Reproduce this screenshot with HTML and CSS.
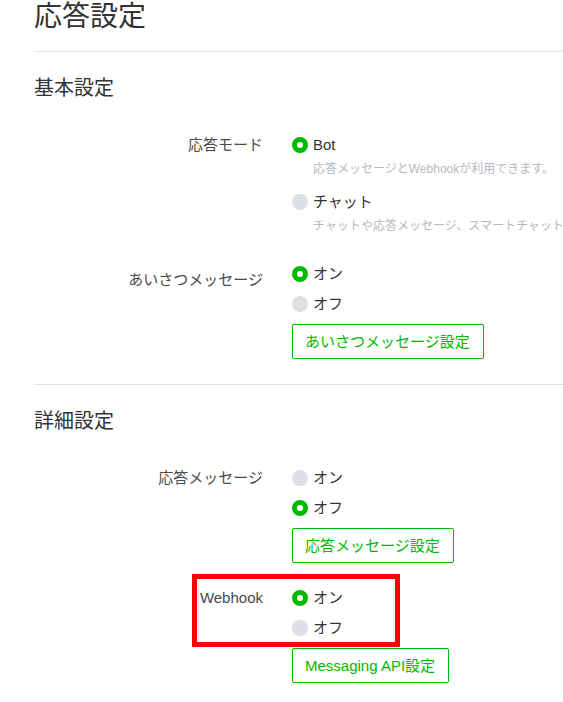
FILE: index.html
```html
<!DOCTYPE html>
<html lang="ja">
<head>
<meta charset="utf-8">
<title>応答設定</title>
<link rel="stylesheet" href="styles.css">
</head>
<body>
<main class="page">
  <h1 class="page-title">応答設定</h1>

  <section class="section">
    <h2 class="section-title">基本設定</h2>
    <div class="fields">
      <div class="field">
        <div class="field-label">応答モード</div>
        <div class="options">
          <div class="option-item">
            <div class="option"><span class="radio is-checked"></span><span class="option-text">Bot</span></div>
            <p class="desc">応答メッセージとWebhookが利用できます。</p>
          </div>
          <div class="option-item">
            <div class="option"><span class="radio"></span><span class="option-text">チャット</span></div>
            <p class="desc">チャットや応答メッセージ、スマートチャットが利用できます。</p>
          </div>
        </div>
      </div>

      <div class="field">
        <div class="field-label field-label--low">あいさつメッセージ</div>
        <div class="options">
          <div class="option"><span class="radio is-checked"></span><span class="option-text">オン</span></div>
          <div class="option"><span class="radio"></span><span class="option-text">オフ</span></div>
          <button class="btn" type="button">あいさつメッセージ設定</button>
        </div>
      </div>
    </div>
  </section>

  <section class="section section--bordered">
    <h2 class="section-title">詳細設定</h2>
    <div class="fields">
      <div class="field">
        <div class="field-label">応答メッセージ</div>
        <div class="options">
          <div class="option"><span class="radio"></span><span class="option-text">オン</span></div>
          <div class="option"><span class="radio is-checked"></span><span class="option-text">オフ</span></div>
          <button class="btn" type="button">応答メッセージ設定</button>
        </div>
      </div>

      <div class="field field--highlight">
        <div class="highlight-box"></div>
        <div class="field-label">Webhook</div>
        <div class="options">
          <div class="option"><span class="radio is-checked"></span><span class="option-text">オン</span></div>
          <div class="option"><span class="radio"></span><span class="option-text">オフ</span></div>
          <button class="btn" type="button">Messaging API設定</button>
        </div>
      </div>
    </div>
  </section>
</main>
</body>
</html>
```

FILE: styles.css
```css
html, body {
  margin: 0;
  padding: 0;
  background: #ffffff;
  overflow: hidden;
}

body {
  font-family: "Liberation Sans", "Noto Sans CJK JP", sans-serif;
  color: #333333;
}

.page {
  padding-left: 34px;
  width: 620px;
}

.page-title {
  margin: 0;
  font-size: 28px;
  line-height: 28px;
  font-weight: normal;
  color: #333333;
  padding-top: 3px;
  padding-bottom: 20px;
  border-bottom: 1px solid #e4e4e4;
}

.section {
  padding-bottom: 25px;
}

.section--bordered {
  border-top: 1px solid #e4e4e4;
}

.section-title {
  margin: 26px 0 37px;
  font-size: 20px;
  line-height: 20px;
  font-weight: normal;
  color: #333333;
}

.fields {
  display: flex;
  flex-direction: column;
  gap: 25px;
}

.field {
  display: flex;
  align-items: flex-start;
}

.field--highlight {
  position: relative;
}

.field-label {
  width: 229px;
  flex: none;
  text-align: right;
  font-size: 15px;
  line-height: 20px;
  color: #4a4a4a;
  margin-right: 29px;
}

.field-label--low {
  padding-top: 6px;
}

.options {
  display: flex;
  flex-direction: column;
  align-items: flex-start;
  gap: 10px;
}

.option {
  display: flex;
  align-items: center;
  height: 20px;
}

.radio {
  width: 16px;
  height: 16px;
  border-radius: 50%;
  background: #dde0e6;
  box-sizing: border-box;
  flex: none;
  margin-right: 5px;
}

.radio.is-checked {
  background: #ffffff;
  border: 5px solid #00b900;
}

.option-text {
  font-size: 15px;
  line-height: 20px;
  color: #333333;
}

.desc {
  margin: 5px 0 4px 21px;
  font-size: 12px;
  line-height: 18px;
  color: #b4b9c1;
  white-space: nowrap;
}

.btn {
  font-family: inherit;
  font-size: 15px;
  line-height: 33px;
  height: 35px;
  padding: 0 13px 0 12px;
  border: 1px solid #00b900;
  border-radius: 2px;
  background: #ffffff;
  color: #00b900;
  cursor: pointer;
}

.highlight-box {
  position: absolute;
  left: 158px;
  top: -14px;
  width: 208px;
  height: 73px;
  box-sizing: border-box;
  border: 5px solid #ff0000;
  pointer-events: none;
}
```
